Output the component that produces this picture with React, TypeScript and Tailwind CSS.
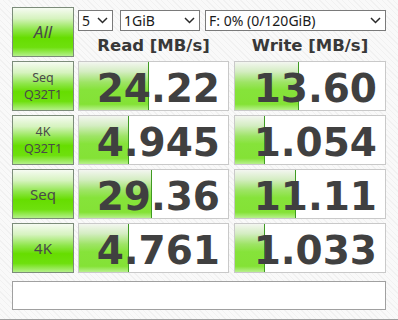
import React from "react";

const btnBg =
  "bg-[linear-gradient(to_bottom,#f6fbf2_0%,#d6f3bf_22%,#8ee64a_45%,#66dd00_62%,#6ee00e_82%,#b4f08a_100%)]";
const barBg =
  "bg-[linear-gradient(to_bottom,#f3f6f0_0%,#d4edc2_20%,#9ee466_42%,#86e33a_58%,#84e236_88%,#b8f08e_100%)]";

function Chevron() {
  return (
    <svg width="11" height="7" viewBox="0 0 11 7" className="shrink-0">
      <path d="M1 1 L5.5 5.5 L10 1" fill="none" stroke="#2a2a2a" strokeWidth="1.5" />
    </svg>
  );
}

function Select({ w, label }: { w: string; label: string }) {
  return (
    <div
      className={`${w} h-[21px] bg-white border border-[#7a7a7a] flex items-center justify-between pl-[3px] pr-[4px] text-[14px] leading-none text-[#1a1a1a]`}
      style={{ fontFamily: '"Noto Sans", sans-serif' }}
    >
      <span className="pt-[1px]">{label}</span>
      <Chevron />
    </div>
  );
}

function Btn({ children, italic, size }: { children: React.ReactNode; italic?: boolean; size: string }) {
  return (
    <div
      className={`w-[62px] h-[50px] shrink-0 border border-[#7c8c7a] ${btnBg} flex flex-col items-center justify-center text-[#4a4a4a] ${size} ${italic ? "italic" : ""}`}
      style={{ fontFamily: '"Noto Sans", sans-serif' }}
    >
      {children}
    </div>
  );
}

function Cell({ value, bar, w }: { value: string; bar: string; w: string }) {
  return (
    <div className={`relative ${w} h-[50px] shrink-0 bg-white border border-[#c9c9c9]`}>
      <div className={`absolute left-0 top-0 bottom-0 ${bar} ${barBg} border-r border-[#3f9a22]`} />
      <div
        className="relative h-full flex items-center justify-end pr-[8px] pt-[4px] text-[39px] leading-none font-bold text-[#404040]"
        style={{ fontFamily: '"DejaVu Sans", sans-serif' }}
      >
        {value}
      </div>
    </div>
  );
}

const rows: { l1: string; l2?: string; r: string; rb: string; wv: string; wb: string; size: string }[] = [
  { l1: "Seq", l2: "Q32T1", r: "24.22", rb: "w-[70px]", wv: "13.60", wb: "w-[64px]", size: "text-[12.5px]" },
  { l1: "4K", l2: "Q32T1", r: "4.945", rb: "w-[50px]", wv: "1.054", wb: "w-[30px]", size: "text-[12.5px]" },
  { l1: "Seq", r: "29.36", rb: "w-[73px]", wv: "11.11", wb: "w-[61px]", size: "text-[15px]" },
  { l1: "4K", r: "4.761", rb: "w-[50px]", wv: "1.033", wb: "w-[30px]", size: "text-[15px]" },
];

export default function App() {
  return (
    <div className="w-[398px] h-[320px] overflow-hidden border-b border-[#a0a0a0] pt-[7px] pl-[12px] bg-[repeating-linear-gradient(45deg,#f9f9f9_0px,#f9f9f9_3px,#f1f1f1_3px,#f1f1f1_4px)]">
      <div className="flex h-[50px]">
        <Btn italic size="text-[17px]">
          <div className="leading-[20px]">All</div>
        </Btn>
        <div className="ml-[4px] w-[308px] flex flex-col">
          <div className="mt-[3px] flex">
            <Select w="w-[35px]" label="5" />
            <div className="ml-[7px]">
              <Select w="w-[80px]" label="1GiB" />
            </div>
            <div className="ml-[5px]">
              <Select w="w-[181px]" label="F: 0% (0/120GiB)" />
            </div>
          </div>
          <div
            className="mt-[5px] flex text-[16.5px] leading-[19px] font-bold text-[#383838]"
            style={{ fontFamily: '"DejaVu Sans", sans-serif' }}
          >
            <div className="w-[151px] text-center">Read [MB/s]</div>
            <div className="ml-[5px] w-[152px] text-center">Write [MB/s]</div>
          </div>
        </div>
      </div>
      {rows.map((r, i) => (
        <div key={i} className="flex mt-[4px]">
          <Btn size={r.size}>
            <div className="leading-[17px]">{r.l1}</div>
            {r.l2 && <div className="leading-[17px]">{r.l2}</div>}
          </Btn>
          <div className="ml-[4px]">
            <Cell value={r.r} bar={r.rb} w="w-[151px]" />
          </div>
          <div className="ml-[5px]">
            <Cell value={r.wv} bar={r.wb} w="w-[152px]" />
          </div>
        </div>
      ))}
      <div className="mt-[8px] w-[374px] h-[29px] bg-white border border-[#a0a0a0]" />
    </div>
  );
}
